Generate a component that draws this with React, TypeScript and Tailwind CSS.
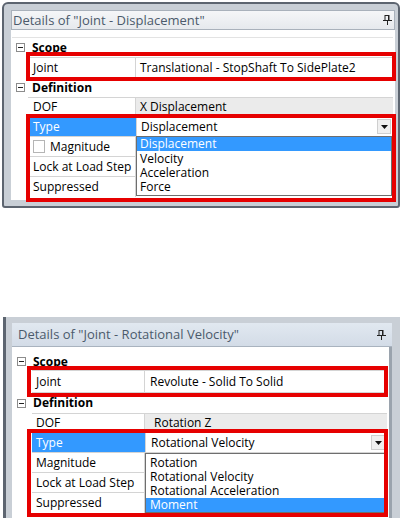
import React from "react";

const font = { fontFamily: '"Open Sans", "Noto Sans", sans-serif' };

function Pin() {
  return (
    <svg width="9" height="10" viewBox="0 0 9 10" className="block">
      <rect x="2" y="0.5" width="4" height="5" fill="none" stroke="#222" strokeWidth="1" />
      <rect x="5" y="0.5" width="1" height="5" fill="#222" />
      <rect x="0" y="5" width="9" height="1" fill="#222" />
      <rect x="4" y="6" width="1" height="4" fill="#222" />
    </svg>
  );
}

function MinusBox() {
  return (
    <div className="w-[9px] h-[9px] border border-[#8c8c8c] bg-white flex items-center justify-center">
      <div className="w-[5px] h-px bg-[#222]" />
    </div>
  );
}

function Arrow() {
  return (
    <svg width="7" height="4" viewBox="0 0 7 4" className="block">
      <polygon points="0,0 7,0 3.5,4" fill="#111" />
    </svg>
  );
}

function CategoryRow({ text, h }: { text: string; h: number }) {
  return (
    <div className="flex items-center" style={{ height: h }}>
      <div className="w-[16px] flex justify-center">
        <MinusBox />
      </div>
      <div className="font-bold text-[12px] text-black pl-[4px]">{text}</div>
    </div>
  );
}

function App() {
  return (
    <div className="w-[400px] h-[518px] bg-white overflow-hidden relative" style={font}>
      {/* top panel */}
      <div className="ml-[2px] mt-[2px] w-[398px] h-[206px] rounded-t-[6px] rounded-b-[3px] border-2 border-[#5d6570] bg-[#c9cfd6] pl-[7px] pr-[3px] pt-[6px]">
        <div className="h-[20px] bg-gradient-to-b from-[#f5f6f8] to-[#e6e9ed] border border-[#a9b1bb] flex items-center justify-between pl-[1px] pr-[2px]">
          <span className="text-[13px] text-[#4b5a6b] leading-none">Details of "Joint - Displacement"</span>
          <Pin />
        </div>
        <div className="bg-white h-[170px] pt-[7px] pl-[1px] pr-[2px]">
          <div className="border-t border-[#e3e3e3]">
            <CategoryRow text="Scope" h={19} />
            <div className="relative flex h-[21px] ml-[16px] border-t border-b border-[#d4d4d4] text-[12px] text-black">
              <div className="w-[108px] pl-[5px] flex items-center border-r border-[#d4d4d4]">Joint</div>
              <div className="flex-1 pl-[4px] flex items-center">Translational - StopShaft To SidePlate2</div>
              <div className="absolute left-[-2px] right-[-3px] top-[-6px] bottom-[-4px] border-[4px] border-[#e60000] pointer-events-none" />
            </div>
            <CategoryRow text="Definition" h={19} />
            <div className="flex h-[20px] ml-[16px] border-t border-b border-[#d4d4d4] text-[12px] text-black">
              <div className="w-[108px] pl-[5px] flex items-center border-r border-[#d4d4d4]">DOF</div>
              <div className="flex-1 pl-[4px] flex items-center bg-[#ebebeb]">X Displacement</div>
            </div>
            <div className="relative ml-[16px] text-[12px] text-black">
              <div className="flex h-[20px] border-b border-[#d4d4d4]">
                <div className="w-[108px] pl-[5px] flex items-center bg-[#3399ff] text-white">Type</div>
                <div className="flex-1 pl-[4px] pr-[2px] flex items-center justify-between bg-white border-l border-[#d4d4d4]">
                  <span>Displacement</span>
                  <div className="w-[14px] h-[15px] bg-[#f0f0f0] border border-[#cfcfcf] flex items-center justify-center">
                    <Arrow />
                  </div>
                </div>
              </div>
              <div className="flex h-[20px] border-b border-[#d4d4d4]">
                <div className="w-[108px] pl-[5px] flex items-center gap-[5px] border-r border-[#d4d4d4]">
                  <div className="w-[12px] h-[13px] border border-[#b5b5b5] bg-white" />
                  <span>Magnitude</span>
                </div>
                <div className="flex-1" />
              </div>
              <div className="flex h-[20px] border-b border-[#d4d4d4]">
                <div className="w-[108px] pl-[5px] flex items-center border-r border-[#d4d4d4] whitespace-nowrap">Lock at Load Step</div>
                <div className="flex-1" />
              </div>
              <div className="flex h-[20px]">
                <div className="w-[108px] pl-[5px] flex items-center border-r border-[#d4d4d4]">Suppressed</div>
                <div className="flex-1" />
              </div>
              <div className="absolute left-[108px] right-[1px] top-[19px] h-[60px] bg-white border border-[#6e6e6e] leading-[14px]">
                <div className="bg-[#3399ff] text-white pl-[3px] h-[14px]">Displacement</div>
                <div className="pl-[3px] h-[14px] mt-[1px]">Velocity</div>
                <div className="pl-[3px] h-[14px]">Acceleration</div>
                <div className="pl-[3px] h-[14px]">Force</div>
              </div>
              <div className="absolute left-[-2px] right-[-3px] top-[-3px] bottom-[-5px] border-[4px] border-[#e60000] pointer-events-none" />
            </div>
          </div>
        </div>
      </div>

      {/* bottom panel */}
      <div className="absolute left-[3px] top-[317px] w-[397px] h-[220px] border-l-[3px] border-[#5d6570] bg-[#c9cfd6] pl-[6px] pr-[8px] pt-[6px]">
        <div className="h-[24px] bg-gradient-to-b from-[#e1e8f0] to-[#d3dce7] border-b border-[#a9b3bf] flex items-center justify-between pl-[6px] pr-[6px]">
          <span className="text-[13px] text-[#4b5a6b] leading-none">Details of "Joint - Rotational Velocity"</span>
          <Pin />
        </div>
        <div className="bg-white h-[200px] pt-[6px] pl-[1px] pr-[2px] border-r-[3px] border-[#9aa3ad]">
          <div>
            <CategoryRow text="Scope" h={17} />
            <div className="relative flex h-[23px] ml-[19px] border-t border-b border-[#d4d4d4] text-[12px] text-black">
              <div className="w-[113px] pl-[4px] flex items-center border-r border-[#d4d4d4]">Joint</div>
              <div className="flex-1 pl-[5px] flex items-center">Revolute - Solid To Solid</div>
              <div className="absolute left-[-5px] right-[-1px] top-[-5px] bottom-[-5px] border-[4px] border-[#e60000] pointer-events-none" />
            </div>
            <CategoryRow text="Definition" h={20} />
            <div className="flex h-[20px] ml-[19px] border-t border-b border-[#d4d4d4] text-[12px] text-black">
              <div className="w-[113px] pl-[4px] flex items-center border-r border-[#d4d4d4]">DOF</div>
              <div className="flex-1 pl-[9px] flex items-center bg-[#ebebeb]">Rotation Z</div>
            </div>
            <div className="relative ml-[19px] text-[12px] text-black">
              <div className="flex h-[20px] border-b border-[#d4d4d4]">
                <div className="w-[113px] pl-[4px] flex items-center bg-[#3399ff] text-white">Type</div>
                <div className="flex-1 pl-[5px] pr-[2px] flex items-center justify-between bg-white border-l border-[#d4d4d4]">
                  <span>Rotational Velocity</span>
                  <div className="w-[14px] h-[15px] bg-[#f0f0f0] border border-[#cfcfcf] flex items-center justify-center">
                    <Arrow />
                  </div>
                </div>
              </div>
              <div className="flex h-[20px] border-b border-[#d4d4d4]">
                <div className="w-[113px] pl-[4px] flex items-center border-r border-[#d4d4d4]">Magnitude</div>
                <div className="flex-1" />
              </div>
              <div className="flex h-[20px] border-b border-[#d4d4d4]">
                <div className="w-[113px] pl-[4px] flex items-center border-r border-[#d4d4d4] whitespace-nowrap">Lock at Load Step</div>
                <div className="flex-1" />
              </div>
              <div className="flex h-[20px]">
                <div className="w-[113px] pl-[4px] flex items-center border-r border-[#d4d4d4]">Suppressed</div>
                <div className="flex-1" />
              </div>
              <div className="absolute left-[113px] right-[1px] top-[20px] h-[60px] bg-white border border-[#6e6e6e] leading-[14px] pt-[2px]">
                <div className="pl-[4px] h-[14px]">Rotation</div>
                <div className="pl-[4px] h-[14px]">Rotational Velocity</div>
                <div className="pl-[4px] h-[14px]">Rotational Acceleration</div>
                <div className="bg-[#3399ff] text-white pl-[4px] h-[14px]">Moment</div>
              </div>
              <div className="absolute left-[-5px] right-[-1px] top-[-4px] bottom-[-4px] border-[4px] border-[#e60000] pointer-events-none" />
            </div>
          </div>
        </div>
      </div>
    </div>
  );
}

export default App;
